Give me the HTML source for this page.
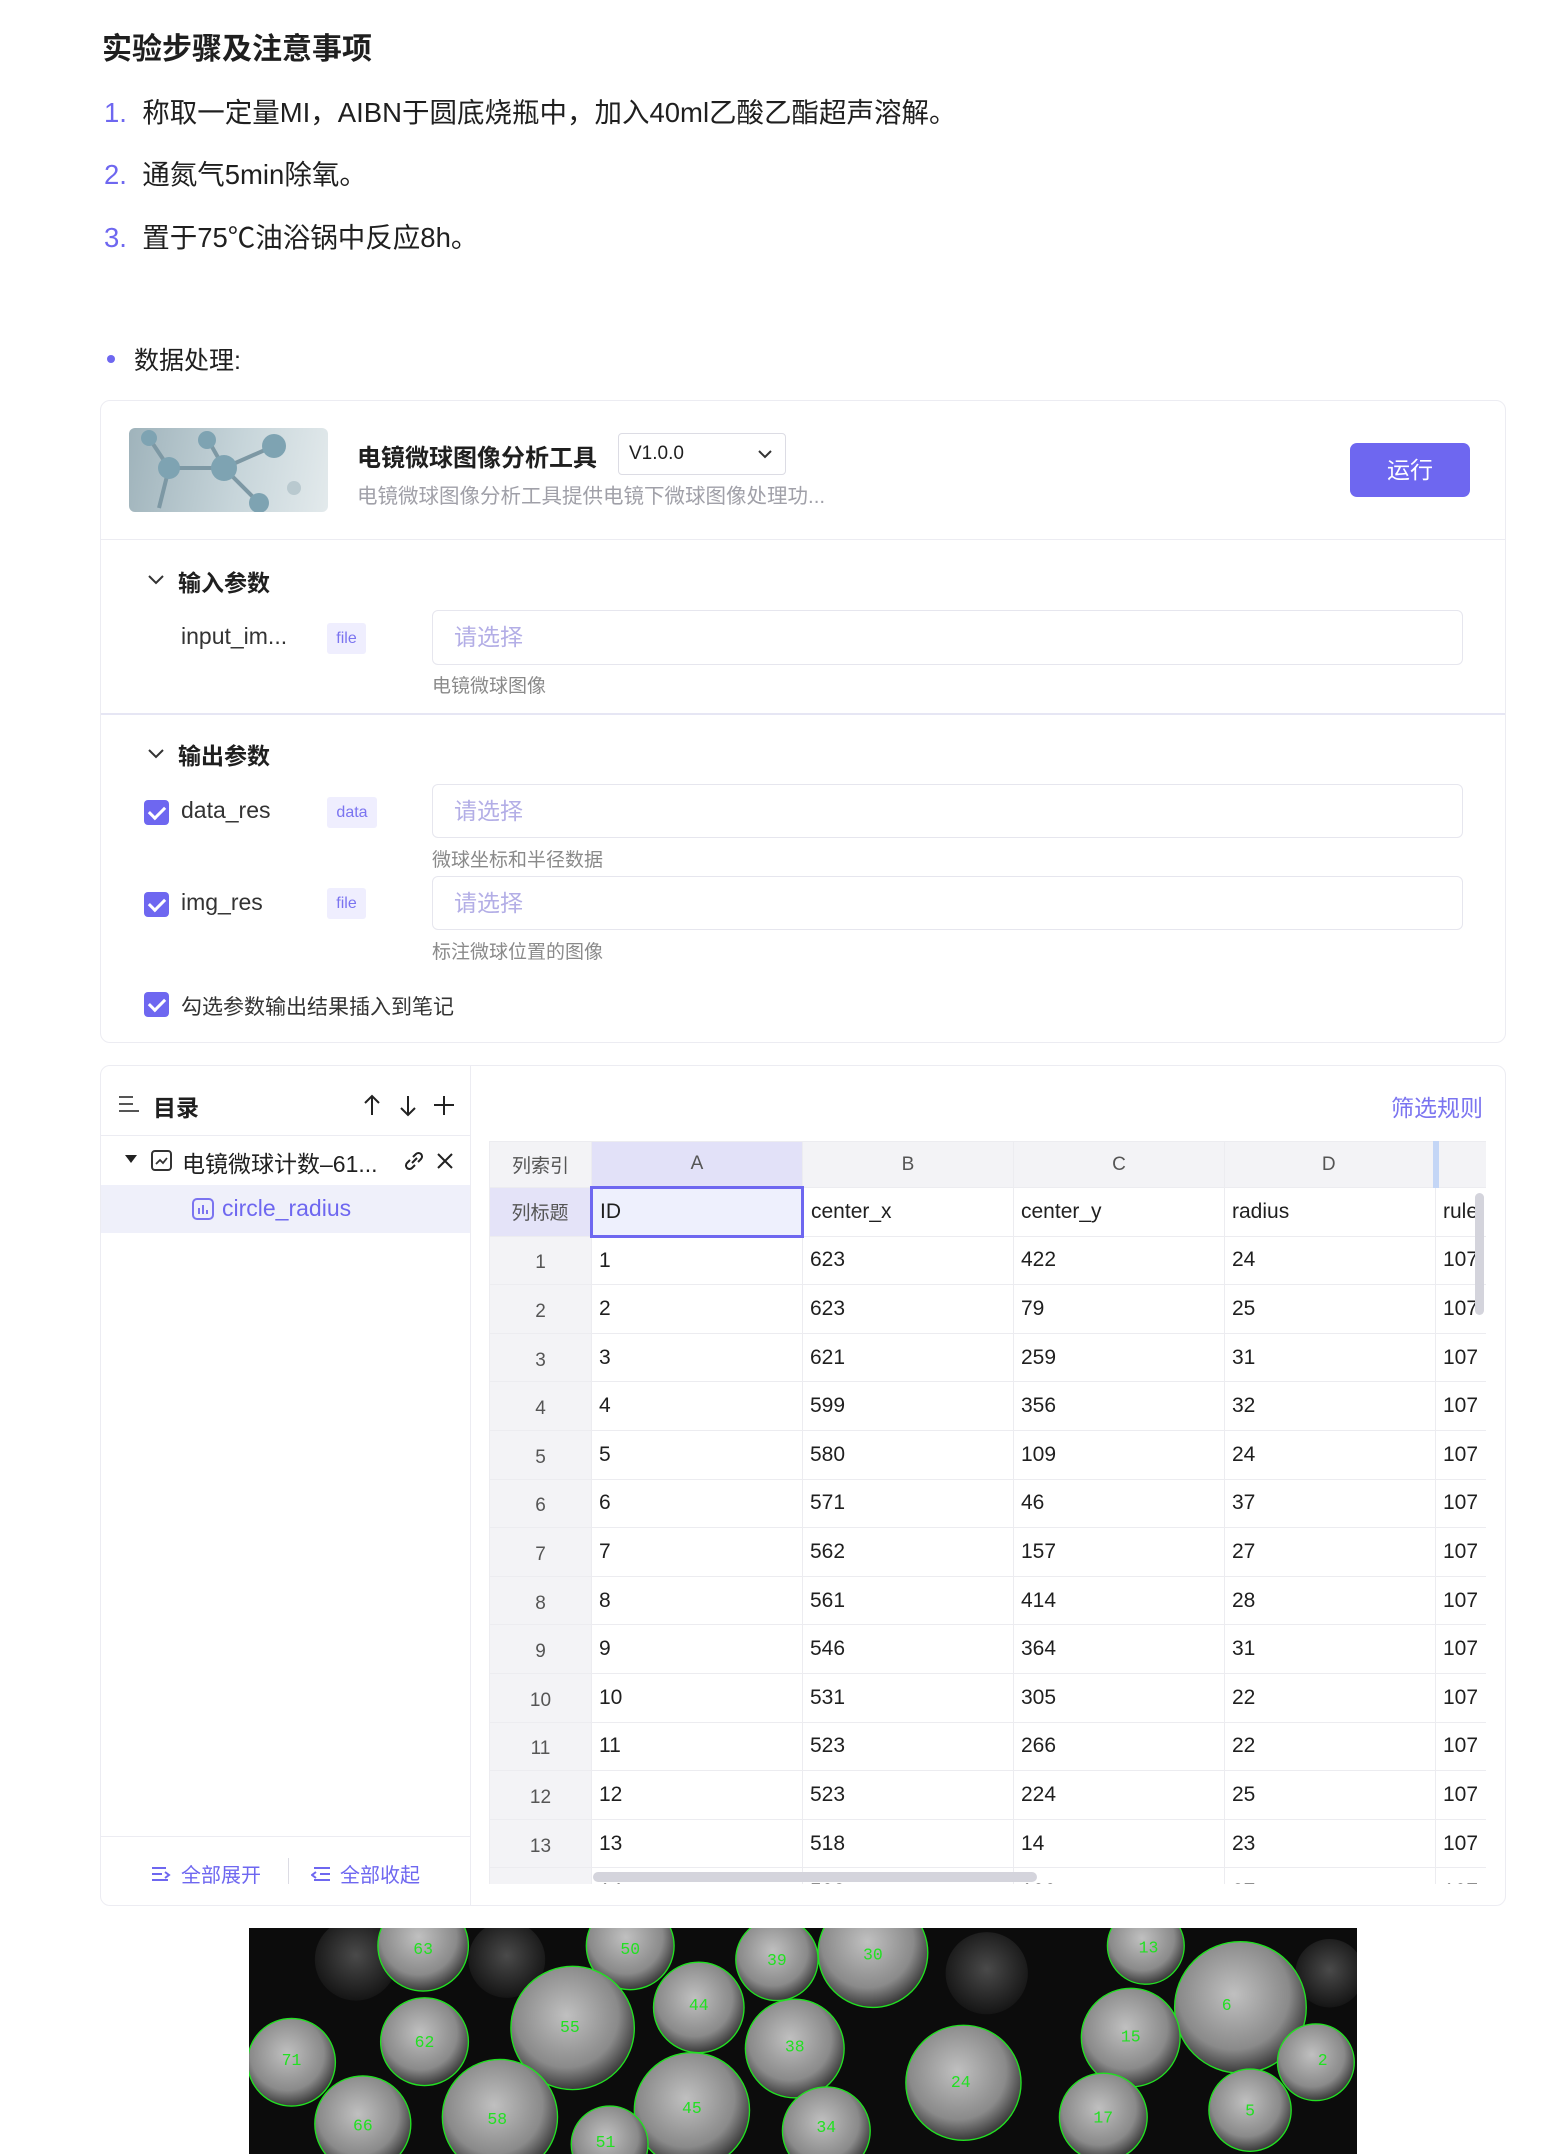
<!DOCTYPE html>
<html><head><meta charset="utf-8"><style>
*{margin:0;padding:0;box-sizing:border-box}
body{width:1554px;height:2154px;background:#fff;position:relative;overflow:hidden;font-family:"Liberation Sans","Noto Sans CJK SC",sans-serif;color:#1f1f1f}
.a{position:absolute;white-space:nowrap}
.num{color:#6e67f0}
.card{position:absolute;border:1px solid #ececf2;border-radius:10px;background:#fff}
.inp{position:absolute;border:1px solid #e6e6ee;border-radius:6px;background:#fff;color:#b3aee6;font-size:23px;padding-left:21px;line-height:52px}
.help{position:absolute;font-size:19px;color:#8a8a8a}
.tag{position:absolute;background:#efeefe;color:#7b74f0;font-size:16px;border-radius:3px;text-align:center}
.cb{position:absolute;width:25px;height:25px;background:#6e67f0;border-radius:4px}
.cb:after{content:"";position:absolute;left:8px;top:3px;width:7px;height:13px;border:solid #fff;border-width:0 3px 3px 0;transform:rotate(45deg)}
table{border-collapse:collapse;table-layout:fixed;font-size:21px}
td{border:1px solid #ececf0;height:48.6px;padding-left:7px;overflow:hidden;white-space:nowrap}
td.i{background:#f3f3f6;color:#555;text-align:center;padding:0;font-size:19px;padding-top:6px}
tr.h td{background:#f3f3f6;color:#555;text-align:center;padding:0;height:46px;font-size:19px}
</style></head><body>
<div class="a" style="left:102px;top:24px;font-size:30px;font-weight:bold">实验步骤及注意事项</div>
<div class="a" style="left:104px;top:90px;font-size:27.5px"><span class="num">1.</span>&nbsp; 称取一定量MI，AIBN于圆底烧瓶中，加入40ml乙酸乙酯超声溶解。</div>
<div class="a" style="left:104px;top:152px;font-size:27.5px"><span class="num">2.</span>&nbsp; 通氮气5min除氧。</div>
<div class="a" style="left:104px;top:215px;font-size:27.5px"><span class="num">3.</span>&nbsp; 置于75℃油浴锅中反应8h。</div>
<div class="a" style="left:107px;top:355px;width:8px;height:8px;border-radius:50%;background:#6e67f0"></div>
<div class="a" style="left:134px;top:341px;font-size:25px">数据处理:</div>

<div class="card" style="left:100px;top:400px;width:1406px;height:643px"></div>
<div class="a" style="left:129px;top:428px;width:199px;height:84px;border-radius:6px;overflow:hidden;background:linear-gradient(100deg,#9fb3bb,#c7d5da 55%,#e3eaec)">
<svg width="199" height="84"><g stroke="#7d98a4" stroke-width="4"><line x1="40" y1="40" x2="95" y2="40"/><line x1="95" y1="40" x2="145" y2="18"/><line x1="40" y1="40" x2="20" y2="10"/><line x1="95" y1="40" x2="78" y2="10"/><line x1="95" y1="40" x2="130" y2="75"/><line x1="40" y1="40" x2="30" y2="80"/></g><g fill="#7ea3b2"><circle cx="40" cy="40" r="11"/><circle cx="95" cy="40" r="13"/><circle cx="145" cy="18" r="12"/><circle cx="78" cy="12" r="9"/><circle cx="20" cy="10" r="8"/><circle cx="130" cy="75" r="10"/><circle cx="165" cy="60" r="7" fill="#b9c9cf"/></g></svg></div>
<div class="a" style="left:357px;top:438px;font-size:24px;font-weight:bold">电镜微球图像分析工具</div>
<div class="a" style="left:618px;top:433px;width:168px;height:42px;border:1px solid #dcdce4;border-radius:4px;font-size:19px;line-height:40px;padding-left:10px">V1.0.0
<svg style="position:absolute;right:12px;top:14px" width="16" height="12"><path d="M2 3l6 6 6-6" stroke="#333" stroke-width="2" fill="none"/></svg></div>
<div class="a" style="left:357px;top:479px;font-size:20.5px;color:#a0a0a8">电镜微球图像分析工具提供电镜下微球图像处理功...</div>
<div class="a" style="left:1350px;top:443px;width:120px;height:54px;background:#6e67f0;border-radius:7px;color:#fff;font-size:23px;text-align:center;line-height:54px">运行</div>
<div class="a" style="left:101px;top:539px;width:1404px;height:1px;background:#ececf2"></div>
<svg class="a" style="left:147px;top:574px" width="18" height="12"><path d="M2 2l7 7 7-7" stroke="#333" stroke-width="2" fill="none"/></svg>
<div class="a" style="left:178px;top:564px;font-size:23px;font-weight:bold">输入参数</div>
<div class="a" style="left:181px;top:623px;font-size:23px;color:#333">input_im...</div>
<div class="tag" style="left:327px;top:623px;width:39px;height:31px;line-height:31px">file</div>
<div class="inp" style="left:432px;top:610px;width:1031px;height:55px">请选择</div>
<div class="help" style="left:432px;top:671px">电镜微球图像</div>
<div class="a" style="left:101px;top:713px;width:1404px;height:2px;background:#e6e6f4"></div>
<svg class="a" style="left:147px;top:748px" width="18" height="12"><path d="M2 2l7 7 7-7" stroke="#333" stroke-width="2" fill="none"/></svg>
<div class="a" style="left:178px;top:737px;font-size:23px;font-weight:bold">输出参数</div>
<div class="cb" style="left:144px;top:800px"></div>
<div class="a" style="left:181px;top:797px;font-size:23px;color:#333">data_res</div>
<div class="tag" style="left:327px;top:797px;width:50px;height:31px;line-height:31px">data</div>
<div class="inp" style="left:432px;top:784px;width:1031px;height:54px">请选择</div>
<div class="help" style="left:432px;top:845px">微球坐标和半径数据</div>
<div class="cb" style="left:144px;top:892px"></div>
<div class="a" style="left:181px;top:889px;font-size:23px;color:#333">img_res</div>
<div class="tag" style="left:327px;top:888px;width:39px;height:31px;line-height:31px">file</div>
<div class="inp" style="left:432px;top:876px;width:1031px;height:54px">请选择</div>
<div class="help" style="left:432px;top:937px">标注微球位置的图像</div>
<div class="cb" style="left:144px;top:992px"></div>
<div class="a" style="left:181px;top:991px;font-size:21px;color:#333">勾选参数输出结果插入到笔记</div>

<div class="card" style="left:100px;top:1065px;width:1406px;height:841px"></div>
<div class="a" style="left:470px;top:1066px;width:1px;height:839px;background:#ececf2"></div>
<svg class="a" style="left:118px;top:1095px" width="22" height="18"><path d="M1 2h14M1 9h14M1 16h20" stroke="#555" stroke-width="2"/></svg>
<div class="a" style="left:153px;top:1089px;font-size:23px;font-weight:bold">目录</div>
<svg class="a" style="left:360px;top:1093px" width="100" height="24"><g stroke="#222" stroke-width="2" fill="none"><path d="M12 3v19M5 10l7-7 7 7"/><path d="M48 3v19M41 15l7 7 7-7"/><path d="M84 3v19M74 12h20"/></g></svg>
<div class="a" style="left:101px;top:1135px;width:369px;height:1px;background:#ececf2"></div>
<svg class="a" style="left:124px;top:1153px" width="14" height="12"><path d="M1 2h12l-6 8z" fill="#222"/></svg>
<svg class="a" style="left:151px;top:1150px" width="22" height="22"><rect x="1" y="1" width="19" height="19" rx="3" stroke="#333" stroke-width="2" fill="none"/><path d="M5 14l4-4 3 3 4-5" stroke="#333" stroke-width="1.8" fill="none"/></svg>
<div class="a" style="left:182px;top:1145px;font-size:23px">电镜微球计数–61...</div>
<svg class="a" style="left:402px;top:1149px" width="24" height="24"><g stroke="#222" stroke-width="2" fill="none"><path d="M10 14l5-5"/><path d="M8 11l-3 3a3.5 3.5 0 005 5l3-3"/><path d="M16 13l3-3a3.5 3.5 0 00-5-5l-3 3"/></g></svg>
<svg class="a" style="left:436px;top:1152px" width="18" height="18"><path d="M2 2l14 14M16 2L2 16" stroke="#222" stroke-width="2"/></svg>
<div class="a" style="left:101px;top:1185px;width:369px;height:48px;background:#eff0fa"></div>
<svg class="a" style="left:192px;top:1198px" width="22" height="22"><rect x="1" y="1" width="20" height="20" rx="4" stroke="#7b74f0" stroke-width="2" fill="none"/><path d="M7 10v6M11 7v9M15 12v4" stroke="#7b74f0" stroke-width="2"/></svg>
<div class="a" style="left:222px;top:1195px;font-size:23px;color:#6e67f0">circle_radius</div>
<div class="a" style="left:101px;top:1836px;width:369px;height:1px;background:#ececf2"></div>
<div class="a" style="left:288px;top:1858px;width:1px;height:26px;background:#dcdce4"></div>
<svg class="a" style="left:151px;top:1866px" width="20" height="18"><path d="M1 2h14M1 8h10M1 14h16M14 6l4 3-4 3" stroke="#6e67f0" stroke-width="2" fill="none"/></svg>
<div class="a" style="left:181px;top:1859px;font-size:20px;color:#6e67f0">全部展开</div>
<svg class="a" style="left:311px;top:1866px" width="20" height="18"><path d="M3 2h16M9 8h10M3 14h16M5 6l-4 3 4 3" stroke="#6e67f0" stroke-width="2" fill="none"/></svg>
<div class="a" style="left:340px;top:1859px;font-size:20px;color:#6e67f0">全部收起</div>
<div class="a" style="left:1391px;top:1089px;font-size:23px;color:#7b74f0">筛选规则</div>

<div class="a" style="left:489px;top:1141px;width:997px;height:743px;overflow:hidden">
<table style="width:1050px">
<colgroup><col style="width:102px"><col style="width:211px"><col style="width:211px"><col style="width:211px"><col style="width:211px"><col style="width:104px"></colgroup>
<tr class="h"><td>列索引</td><td style="background:#e2e1f8">A</td><td>B</td><td>C</td><td>D</td><td style="border-left:6px solid #c4d6f6"></td></tr>
<tr><td class="i" style="background:#e4e3f8;padding-top:0">列标题</td><td style="border:3px solid #6e67f0;background:#eef0fd">ID</td><td>center_x</td><td>center_y</td><td>radius</td><td>rule</td></tr>
<tr><td class="i">1</td><td>1</td><td>623</td><td>422</td><td>24</td><td>107</td></tr>
<tr><td class="i">2</td><td>2</td><td>623</td><td>79</td><td>25</td><td>107</td></tr>
<tr><td class="i">3</td><td>3</td><td>621</td><td>259</td><td>31</td><td>107</td></tr>
<tr><td class="i">4</td><td>4</td><td>599</td><td>356</td><td>32</td><td>107</td></tr>
<tr><td class="i">5</td><td>5</td><td>580</td><td>109</td><td>24</td><td>107</td></tr>
<tr><td class="i">6</td><td>6</td><td>571</td><td>46</td><td>37</td><td>107</td></tr>
<tr><td class="i">7</td><td>7</td><td>562</td><td>157</td><td>27</td><td>107</td></tr>
<tr><td class="i">8</td><td>8</td><td>561</td><td>414</td><td>28</td><td>107</td></tr>
<tr><td class="i">9</td><td>9</td><td>546</td><td>364</td><td>31</td><td>107</td></tr>
<tr><td class="i">10</td><td>10</td><td>531</td><td>305</td><td>22</td><td>107</td></tr>
<tr><td class="i">11</td><td>11</td><td>523</td><td>266</td><td>22</td><td>107</td></tr>
<tr><td class="i">12</td><td>12</td><td>523</td><td>224</td><td>25</td><td>107</td></tr>
<tr><td class="i">13</td><td>13</td><td>518</td><td>14</td><td>23</td><td>107</td></tr>
<tr><td class="i">14</td><td>14</td><td>508</td><td>100</td><td>27</td><td>107</td></tr>
</table>
<div style="position:absolute;left:104px;top:731px;width:444px;height:10px;border-radius:5px;background:#d4d4dc"></div>
<div style="position:absolute;left:986px;top:52px;width:9px;height:122px;border-radius:5px;background:#d4d4dc"></div>
</div>

<svg class="a" style="left:249px;top:1928px" width="1108" height="226" viewBox="182 1407 808 165" preserveAspectRatio="none">
<defs><radialGradient id="g" cx="45%" cy="40%" r="60%"><stop offset="0" stop-color="#c0c0c0"/><stop offset="0.7" stop-color="#8a8a8a"/><stop offset="1" stop-color="#3a3a3a"/></radialGradient>
<radialGradient id="d" cx="50%" cy="45%" r="55%"><stop offset="0" stop-color="#4a4a4a"/><stop offset="1" stop-color="#151515"/></radialGradient></defs>
<rect x="182" y="1407" width="808" height="165" fill="#0c0c0c"/>
<g fill="url(#d)"><circle cx="260" cy="1430" r="30"/><circle cx="370" cy="1430" r="28"/><circle cx="720" cy="1440" r="30"/><circle cx="970" cy="1440" r="25"/></g>
<g fill="url(#g)" stroke="#22e022" stroke-width="1">
<circle cx="309" cy="1420" r="33"/><circle cx="460" cy="1420" r="32"/><circle cx="567" cy="1430" r="30"/><circle cx="637" cy="1425" r="40"/><circle cx="836" cy="1420" r="28"/><circle cx="905" cy="1465" r="48"/><circle cx="418" cy="1480" r="45"/><circle cx="510" cy="1465" r="33"/><circle cx="580" cy="1495" r="36"/><circle cx="310" cy="1490" r="32"/><circle cx="213" cy="1505" r="32"/><circle cx="825" cy="1487" r="36"/><circle cx="960" cy="1505" r="28"/><circle cx="703" cy="1520" r="42"/><circle cx="265" cy="1550" r="35"/><circle cx="365" cy="1545" r="42"/><circle cx="505" cy="1540" r="42"/><circle cx="445" cy="1565" r="28"/><circle cx="603" cy="1555" r="32"/><circle cx="805" cy="1545" r="32"/><circle cx="912" cy="1540" r="30"/></g>
<g fill="#22e022" font-size="12" font-family="Liberation Mono,monospace" text-anchor="middle">
<text x="309" y="1426">63</text><text x="460" y="1426">50</text><text x="567" y="1434">39</text><text x="637" y="1430">30</text><text x="838" y="1425">13</text><text x="895" y="1467">6</text><text x="416" y="1483">55</text><text x="510" y="1467">44</text><text x="580" y="1497">38</text><text x="310" y="1494">62</text><text x="213" y="1507">71</text><text x="825" y="1490">15</text><text x="965" y="1507">2</text><text x="701" y="1523">24</text><text x="265" y="1555">66</text><text x="363" y="1550">58</text><text x="505" y="1542">45</text><text x="442" y="1567">51</text><text x="603" y="1556">34</text><text x="805" y="1549">17</text><text x="912" y="1544">5</text></g>
</svg>
</body></html>
